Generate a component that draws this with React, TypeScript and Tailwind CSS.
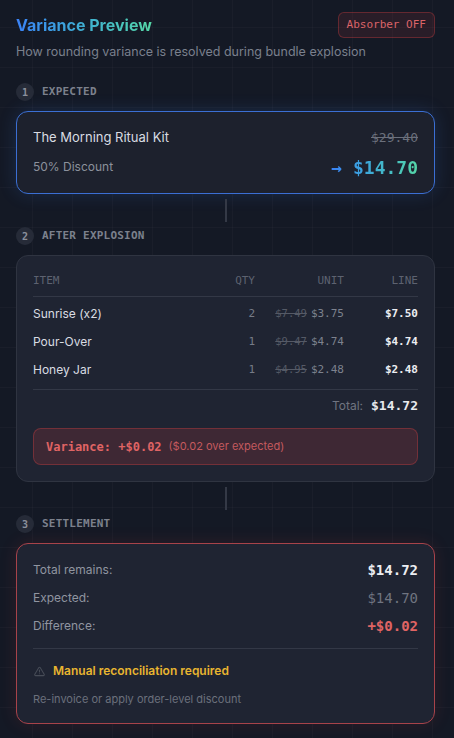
import React from "react";

const mono = "font-['DejaVu_Sans_Mono',monospace]";

function Step({ n, label }: { n: number; label: string }) {
  return (
    <div className="flex h-[18px] items-center gap-2">
      <div
        className={`flex h-[18px] w-[18px] items-center justify-center rounded-full bg-[#262b38] text-[10px] font-bold text-[#8b909c] ${mono}`}
      >
        {n}
      </div>
      <span className={`text-[11px] font-bold uppercase tracking-[0.02em] text-[#7c818d] ${mono}`}>{label}</span>
    </div>
  );
}

function Connector() {
  return (
    <div className="flex justify-center py-[5px]">
      <div className="h-[23px] w-[2px] bg-[#343946]" />
    </div>
  );
}

const rows = [
  { item: "Sunrise (x2)", qty: "2", was: "$7.49", unit: "$3.75", line: "$7.50" },
  { item: "Pour-Over", qty: "1", was: "$9.47", unit: "$4.74", line: "$4.74" },
  { item: "Honey Jar", qty: "1", was: "$4.95", unit: "$2.48", line: "$2.48" },
];

export default function App() {
  return (
    <div
      className="min-h-screen w-full bg-[#141925] pb-[14px] pl-4 pr-[19px] pt-[11px] font-['Inter','Noto_Sans',sans-serif]"
      style={{
        backgroundImage:
          "linear-gradient(rgba(255,255,255,0.022) 1px, transparent 1px), linear-gradient(90deg, rgba(255,255,255,0.022) 1px, transparent 1px)",
        backgroundSize: "40px 40px",
        backgroundPosition: "32px 27px",
      }}
    >
      {/* Header */}
      <div className="flex h-7 items-center justify-between">
        <h1 className="bg-gradient-to-r from-[#3b82f6] to-[#55d6a6] bg-clip-text text-[16px] font-bold leading-7 text-transparent">
          Variance Preview
        </h1>
        <div
          className={`flex h-[26px] items-center rounded-md border border-[#ef4444]/30 bg-[#ef4444]/10 px-[8px] text-[11px] text-[#dc6468] ${mono}`}
        >
          Absorber OFF
        </div>
      </div>
      <p className="mt-[3px] text-[12.5px] leading-5 text-[#7a808d]">
        How rounding variance is resolved during bundle explosion
      </p>

      {/* Step 1 */}
      <div className="mt-[21px]">
        <Step n={1} label="Expected" />
      </div>
      <div className="mt-[10px] rounded-xl border border-[#3b6fd4] bg-[#1d212d] px-4 pb-3 pt-4 shadow-[0_0_18px_rgba(59,130,246,0.18)]">
        <div className="flex h-5 items-center justify-between">
          <span className="text-[13px] text-[#d9dce2]">The Morning Ritual Kit</span>
          <span className={`text-[13px] text-[#6b707c] line-through ${mono}`}>$29.40</span>
        </div>
        <div className="mt-[5px] flex h-7 items-center justify-between">
          <span className="text-[12px] text-[#8c919c]">50% Discount</span>
          <span
            className={`bg-gradient-to-r from-[#3b82f6] to-[#55d6a6] bg-clip-text text-[18px] font-bold text-transparent ${mono}`}
          >
            → $14.70
          </span>
        </div>
      </div>

      <Connector />

      {/* Step 2 */}
      <Step n={2} label="After Explosion" />
      <div className="mt-[10px] rounded-xl border border-[#2f3441] bg-[#1f2432] p-4">
        <div
          className={`grid grid-cols-[1fr_48px_89px_74px] border-b border-[#333846] pb-[6px] text-[11px] uppercase leading-[18px] text-[#5d6270] ${mono}`}
        >
          <span>Item</span>
          <span className="text-right">Qty</span>
          <span className="text-right">Unit</span>
          <span className="text-right">Line</span>
        </div>
        <div className="mt-[3px] border-b border-[#333846] pb-[5px]">
          {rows.map((r) => (
            <div key={r.item} className="grid h-7 grid-cols-[1fr_48px_89px_74px] items-center">
              <span className="text-[12px] text-[#d9dce2]">{r.item}</span>
              <span className={`text-right text-[11px] text-[#767b87] ${mono}`}>{r.qty}</span>
              <span className={`flex items-baseline justify-end ${mono}`}>
                <span className="text-[10.5px] text-[#555a66] line-through">{r.was}</span>
                <span className="ml-[4px] text-[11px] text-[#7d828e]">{r.unit}</span>
              </span>
              <span className={`text-right text-[11px] font-bold text-[#eceef2] ${mono}`}>{r.line}</span>
            </div>
          ))}
        </div>
        <div className="mt-[6px] flex h-5 items-center justify-end gap-2">
          <span className="text-[12px] text-[#6f7480]">Total:</span>
          <span className={`text-[13px] font-bold text-[#e8eaee] ${mono}`}>$14.72</span>
        </div>
        <div className="mt-[12px] flex h-[37px] items-center gap-[7px] rounded-lg border border-[#ef4444]/30 bg-[#ef4444]/15 px-3">
          <span className={`text-[12px] font-bold text-[#e06464] ${mono}`}>Variance: +$0.02</span>
          <span className="text-[11px] text-[#c45a5e]">($0.02 over expected)</span>
        </div>
      </div>

      <Connector />

      {/* Step 3 */}
      <Step n={3} label="Settlement" />
      <div className="mt-[10px] rounded-xl border border-[#a8434a] bg-[#1f2432] p-4 shadow-[0_0_18px_rgba(239,68,68,0.12)]">
        <div className="flex h-5 items-center justify-between">
          <span className="text-[12px] text-[#9095a0]">Total remains:</span>
          <span className={`text-[14px] font-bold text-[#eceef2] ${mono}`}>$14.72</span>
        </div>
        <div className="mt-2 flex h-5 items-center justify-between">
          <span className="text-[12px] text-[#9095a0]">Expected:</span>
          <span className={`text-[14px] text-[#6f7480] ${mono}`}>$14.70</span>
        </div>
        <div className="mt-2 flex h-5 items-center justify-between">
          <span className="text-[12px] text-[#9095a0]">Difference:</span>
          <span className={`text-[14px] font-bold text-[#e06464] ${mono}`}>+$0.02</span>
        </div>
        <div className="mt-3 border-t border-[#333846] pt-3">
          <div className="flex h-5 items-center gap-2">
            <svg width="11" height="11" viewBox="0 0 24 24" fill="none" stroke="#474c57" strokeWidth="2.2" strokeLinecap="round" strokeLinejoin="round" className="ml-px">
              <path d="M10.3 3.9 1.8 18a2 2 0 0 0 1.7 3h17a2 2 0 0 0 1.7-3L13.7 3.9a2 2 0 0 0-3.4 0z" />
              <path d="M12 9v4" />
              <path d="M12 17h.01" />
            </svg>
            <span className="text-[12px] font-semibold text-[#e8b530]">Manual reconciliation required</span>
          </div>
          <p className="mt-[10px] text-[11px] leading-4 text-[#6b707c]">Re-invoice or apply order-level discount</p>
        </div>
      </div>
    </div>
  );
}
